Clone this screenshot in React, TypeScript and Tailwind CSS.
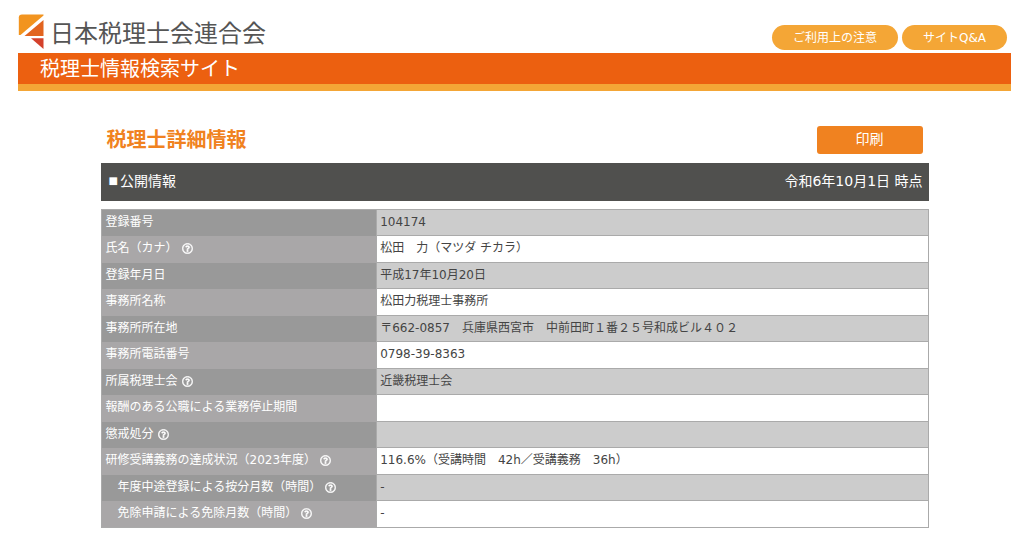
import type { ReactNode } from "react";
import { FaRegQuestionCircle } from "react-icons/fa";

type Row = { label: string; value: string; help?: boolean; indent?: boolean };

const ROWS: Row[] = [
  { label: "登録番号", value: "104174" },
  { label: "氏名（カナ）", value: "松田　力（マツダ チカラ）", help: true },
  { label: "登録年月日", value: "平成17年10月20日" },
  { label: "事務所名称", value: "松田力税理士事務所" },
  { label: "事務所所在地", value: "〒662-0857　兵庫県西宮市　中前田町１番２５号和成ビル４０２" },
  { label: "事務所電話番号", value: "0798-39-8363" },
  { label: "所属税理士会", value: "近畿税理士会", help: true },
  { label: "報酬のある公職による業務停止期間", value: "" },
  { label: "懲戒処分", value: "", help: true },
  { label: "研修受講義務の達成状況（2023年度）", value: "116.6%（受講時間　42h／受講義務　36h）", help: true },
  { label: "年度中途登録による按分月数（時間）", value: "-", help: true, indent: true },
  { label: "免除申請による免除月数（時間）", value: "-", help: true, indent: true },
];

function Logo() {
  return (
    <svg viewBox="0 0 26 35" className="h-[35px] w-[26px] shrink-0" aria-hidden="true">
      <path d="M4 .5H25.500V1.500L2.500 21H.8V3.500Q.8.5 4 .5Z" fill="#f2941f" />
      <path d="M25.500 6V22H6.500Z" fill="#e2641f" />
      <path d="M13 24.300H25.500V35Z" fill="#d4412b" />
    </svg>
  );
}

function NavPill({ children }: { children: ReactNode }) {
  return (
    <a href="#" className="rounded-full bg-[#f4a636] px-[21px] pt-px text-xs leading-6 text-white">
      {children}
    </a>
  );
}

export default function App() {
  return (
    <div className="bg-white pr-[13px] pl-[18px] font-['DejaVu_Sans','Noto_Sans_CJK_JP',sans-serif] text-[#444]">
      <header>
        <div className="flex items-end justify-between pt-3.5">
          <a href="#" className="flex items-start gap-1.5 pb-1 text-2xl leading-none text-[#555]">
            <Logo />
            <span className="pt-2">日本税理士会連合会</span>
          </a>
          <nav className="flex gap-1 pr-1 pb-[3px]">
            <NavPill>ご利用上の注意</NavPill>
            <NavPill>サイトQ&amp;A</NavPill>
          </nav>
        </div>
        <h1 className="border-b-[7px] border-[#f4a636] bg-[#ec6010] pt-px pl-[22px] text-xl leading-[30px] text-white">
          税理士情報検索サイト
        </h1>
      </header>

      <main className="mx-auto max-w-[828px] pt-[35px] pb-6">
        <div className="flex items-center justify-between px-1.5">
          <h2 className="text-xl leading-7 font-bold text-[#f08220]">税理士詳細情報</h2>
          <button type="button" className="w-[106px] rounded-[3px] bg-[#f08220] pb-0.5 text-sm leading-[26px] text-white">
            印刷
          </button>
        </div>

        <div className="mt-[9px] flex justify-between bg-[#50504e] px-1.5 pb-0.5 text-sm leading-9 text-white">
          <h3 className="flex items-center gap-0.5 pl-0.5">
            <span className="text-[10px]">■</span>
            公開情報
          </h3>
          <p>令和6年10月1日 時点</p>
        </div>

        <table className="mt-2 w-full table-fixed border-collapse border border-[#aaa] text-xs leading-[18px]">
          <tbody>
            {ROWS.map((row) => (
              <tr key={row.label} className="group h-[26px] even:h-[27px]">
                <th
                  scope="row"
                  className={`w-1/3 bg-[#999] p-0 pb-0.5 text-left font-normal text-white group-even:bg-[#a9a7a8] ${row.indent ? "pl-4" : "pl-1"}`}
                >
                  {row.label}
                  {row.help && (
                    <button type="button" aria-label={`${row.label}の説明`} className="ml-1 align-[-2px]">
                      <FaRegQuestionCircle className="size-[11px] stroke-white stroke-[16px]" />
                    </button>
                  )}
                </th>
                <td className="border border-[#aaa] bg-[#ccc] p-0 pb-0.5 pl-[3px] group-even:bg-white">{row.value}</td>
              </tr>
            ))}
          </tbody>
        </table>
      </main>
    </div>
  );
}
